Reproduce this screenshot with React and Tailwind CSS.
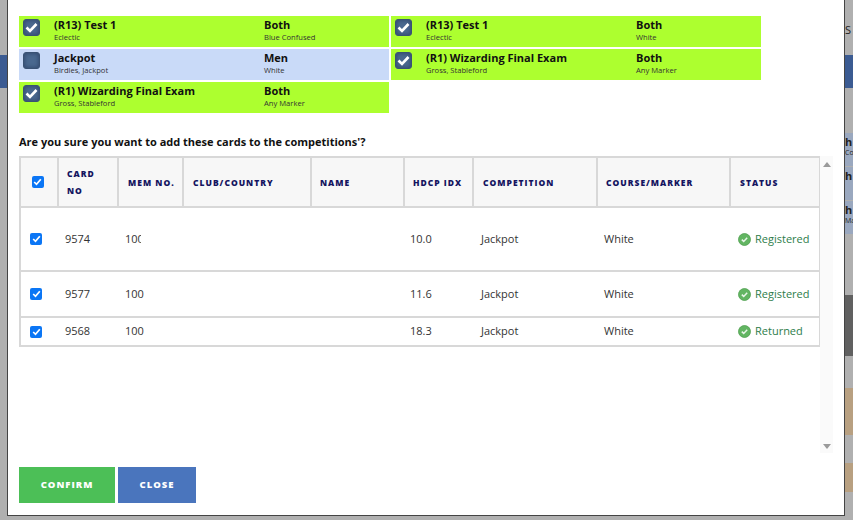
import React from 'react';

const comps = [
  [{ title: '(R13) Test 1', sub: 'Eclectic', who: 'Both', tee: 'Blue Confused', on: true }, { title: '(R13) Test 1', sub: 'Eclectic', who: 'Both', tee: 'White', on: true }],
  [{ title: 'Jackpot', sub: 'Birdies, Jackpot', who: 'Men', tee: 'White', on: false }, { title: '(R1) Wizarding Final Exam', sub: 'Gross, Stableford', who: 'Both', tee: 'Any Marker', on: true }],
  [{ title: '(R1) Wizarding Final Exam', sub: 'Gross, Stableford', who: 'Both', tee: 'Any Marker', on: true }],
];

const heads = [
  { label: 'CARD NO', w: 'w-[60px] pl-[8px]' },
  { label: 'MEM NO.', w: 'w-[65px] pl-[9px]' },
  { label: 'CLUB/COUNTRY', w: 'w-[128px] pl-[9px]' },
  { label: 'NAME', w: 'w-[93px] pl-[8px]' },
  { label: 'HDCP IDX', w: 'w-[69px] pl-[8px]' },
  { label: 'COMPETITION', w: 'w-[124px] pl-[9px]' },
  { label: 'COURSE/MARKER', w: 'w-[133px] pl-[8px]' },
  { label: 'STATUS', w: 'w-[90px] pl-[9px]' },
];

const rows = [
  { card: '9574', mem: '100', clip: true, idx: '10.0', status: 'Registered', h: 'h-[64px]' },
  { card: '9577', mem: '100', idx: '11.6', status: 'Registered', h: 'h-[46px]' },
  { card: '9568', mem: '100', idx: '18.3', status: 'Returned', h: 'h-[29px]' },
];

function BigCheck({ on }) {
  return (
    <div className="w-[17px] h-[17px] mt-[1px] shrink-0 rounded-[3px] bg-[#4a688f] border border-[#3a5274] shadow-[inset_0_0_4px_rgba(20,35,65,0.55)] flex items-center justify-center">
      {on && (
        <svg width="13" height="11" viewBox="0 0 13 11">
          <path d="M1.5 5.5 L5 9 L11.5 2" fill="none" stroke="#fff" strokeWidth="2.6" />
        </svg>
      )}
    </div>
  );
}

function CompCard({ c }) {
  return (
    <div className={`w-[370px] h-[31px] flex pl-[4px] pt-[2px] ${c.on ? 'bg-[#adff2f]' : 'bg-[#c9daf8]'}`}>
      <BigCheck on={c.on} />
      <div className="w-[210px] ml-[14px]">
        <div className="text-[11px] leading-[14px] font-bold text-[#111]">{c.title}</div>
        <div className="text-[7.6px] leading-[11px] text-[#333]">{c.sub}</div>
      </div>
      <div>
        <div className="text-[11px] leading-[14px] font-bold text-[#111]">{c.who}</div>
        <div className="text-[7.6px] leading-[11px] text-[#333]">{c.tee}</div>
      </div>
    </div>
  );
}

function SmallCheck() {
  return (
    <div className="w-[12px] h-[12px] rounded-[2px] bg-[#0b76f5] flex items-center justify-center">
      <svg width="9" height="8" viewBox="0 0 9 8">
        <path d="M1.2 4 L3.5 6.3 L7.8 1.2" fill="none" stroke="#fff" strokeWidth="1.7" />
      </svg>
    </div>
  );
}

function StatusIcon() {
  return (
    <svg width="13" height="13" viewBox="0 0 13 13" className="shrink-0">
      <circle cx="6.5" cy="6.5" r="6" fill="#62b562" stroke="#4f9f4f" strokeWidth="0.8" />
      <path d="M3.8 6.6 L5.7 8.4 L9.2 4.8" fill="none" stroke="#e8f5e8" strokeWidth="1.5" />
    </svg>
  );
}

export default function App() {
  return (
    <div className="w-[853px] h-[520px] overflow-hidden flex bg-[#b0b0b0] font-['Open_Sans',sans-serif]">
      {/* page behind the modal */}
      <div className="w-[7px] shrink-0 flex flex-col">
        <div className="h-[55px]" />
        <div className="h-[33px] bg-[#3b5b92]" />
      </div>

      <div className="w-[838px] h-[516px] shrink-0 bg-white border-l border-r border-b border-[#444] pl-[11px] pt-[16px] flex flex-col">
        <div className="flex flex-col gap-[2px]">
          {comps.map((row, i) => (
            <div key={i} className="flex gap-[2px]">
              {row.map((c, j) => <CompCard key={j} c={c} />)}
            </div>
          ))}
        </div>

        <p className="mt-[21px] text-[11px] leading-[16px] font-bold text-[#111]">
          Are you sure you want to add these cards to the competitions'?
        </p>

        <div className="mt-[6px] flex h-[297px]">
          <div className="w-[801px]">
            <table className="w-[800px] table-fixed border-collapse">
              <thead>
                <tr className="h-[50px] bg-[#f7f7f7]">
                  <th className="w-[38px] border-2 border-[#d8d8d8] align-middle">
                    <div className="flex justify-center pr-[3px]"><SmallCheck /></div>
                  </th>
                  {heads.map((h) => (
                    <th key={h.label} className={`${h.w} border-2 border-[#d8d8d8] pr-[4px] text-left align-middle text-[8.5px] leading-[17px] font-extrabold tracking-[1px] text-[#14145f]`}>
                      {h.label}
                    </th>
                  ))}
                </tr>
              </thead>
              <tbody>
                {rows.map((r) => (
                  <tr key={r.card} className={`${r.h} border-b-2 border-[#d8d8d8] text-[11px] text-[#333]`}>
                    <td className="border-l-2 border-[#d8d8d8]">
                      <div className="flex justify-center pr-[7px]"><SmallCheck /></div>
                    </td>
                    <td className="pl-[7px]">{r.card}</td>
                    <td className="pl-[7px]">
                      <div className={r.clip ? 'w-[16px] overflow-hidden' : ''}>{r.mem}</div>
                    </td>
                    <td />
                    <td />
                    <td className="pl-[6px]">{r.idx}</td>
                    <td className="pl-[8px]">Jackpot</td>
                    <td className="pl-[7px]">White</td>
                    <td className="border-r-2 border-[#d8d8d8] pl-[8px]">
                      <div className="flex items-center gap-[4px] text-[#2e7d4a] whitespace-nowrap">
                        <StatusIcon />
                        <span>{r.status}</span>
                      </div>
                    </td>
                  </tr>
                ))}
              </tbody>
            </table>
          </div>
          <div className="w-[13px] bg-[#fafafa] flex flex-col items-center justify-between pt-[6px] pb-[4px]">
            <div className="w-0 h-0 border-l-[4px] border-r-[4px] border-b-[5px] border-l-transparent border-r-transparent border-b-[#9a9a9a]" />
            <div className="w-0 h-0 border-l-[4px] border-r-[4px] border-t-[5px] border-l-transparent border-r-transparent border-t-[#9a9a9a]" />
          </div>
        </div>

        <div className="mt-[14px] flex gap-[3px]">
          <button className="w-[96px] h-[36px] bg-[#4cbf57] text-white text-[9.5px] font-extrabold tracking-[1px]">CONFIRM</button>
          <button className="w-[78px] h-[36px] bg-[#4a75bd] text-white text-[9.5px] font-extrabold tracking-[1px]">CLOSE</button>
        </div>
      </div>

      <div className="w-[8px] shrink-0 flex flex-col overflow-hidden text-[#222]">
        <div className="h-[22px] shrink-0" />
        <div className="h-[33px] shrink-0 text-[11px] leading-[16px]">S</div>
        <div className="h-[33px] shrink-0 bg-[#3b5b92]" />
        <div className="h-[45px] shrink-0" />
        <div className="h-[33px] shrink-0 pt-[2px] bg-[#9aa8bf] text-[11px] font-bold leading-[14px]">h<div className="text-[7px] font-normal leading-[8px]">Co</div></div>
        <div className="h-[33px] shrink-0 mt-[1px] pt-[2px] bg-[#9aa8bf] text-[11px] font-bold leading-[14px]">h</div>
        <div className="h-[33px] shrink-0 mt-[1px] pt-[2px] bg-[#9aa8bf] text-[11px] font-bold leading-[14px]">h<div className="text-[7px] font-normal leading-[8px]">Ma</div></div>
        <div className="h-[61px] shrink-0" />
        <div className="h-[61px] shrink-0 bg-[#606060]" />
        <div className="h-[32px] shrink-0" />
        <div className="h-[47px] shrink-0 bg-[#b8a081]" />
        <div className="h-[28px] shrink-0" />
        <div className="h-[29px] shrink-0 bg-[#b8a081]" />
      </div>
    </div>
  );
}
